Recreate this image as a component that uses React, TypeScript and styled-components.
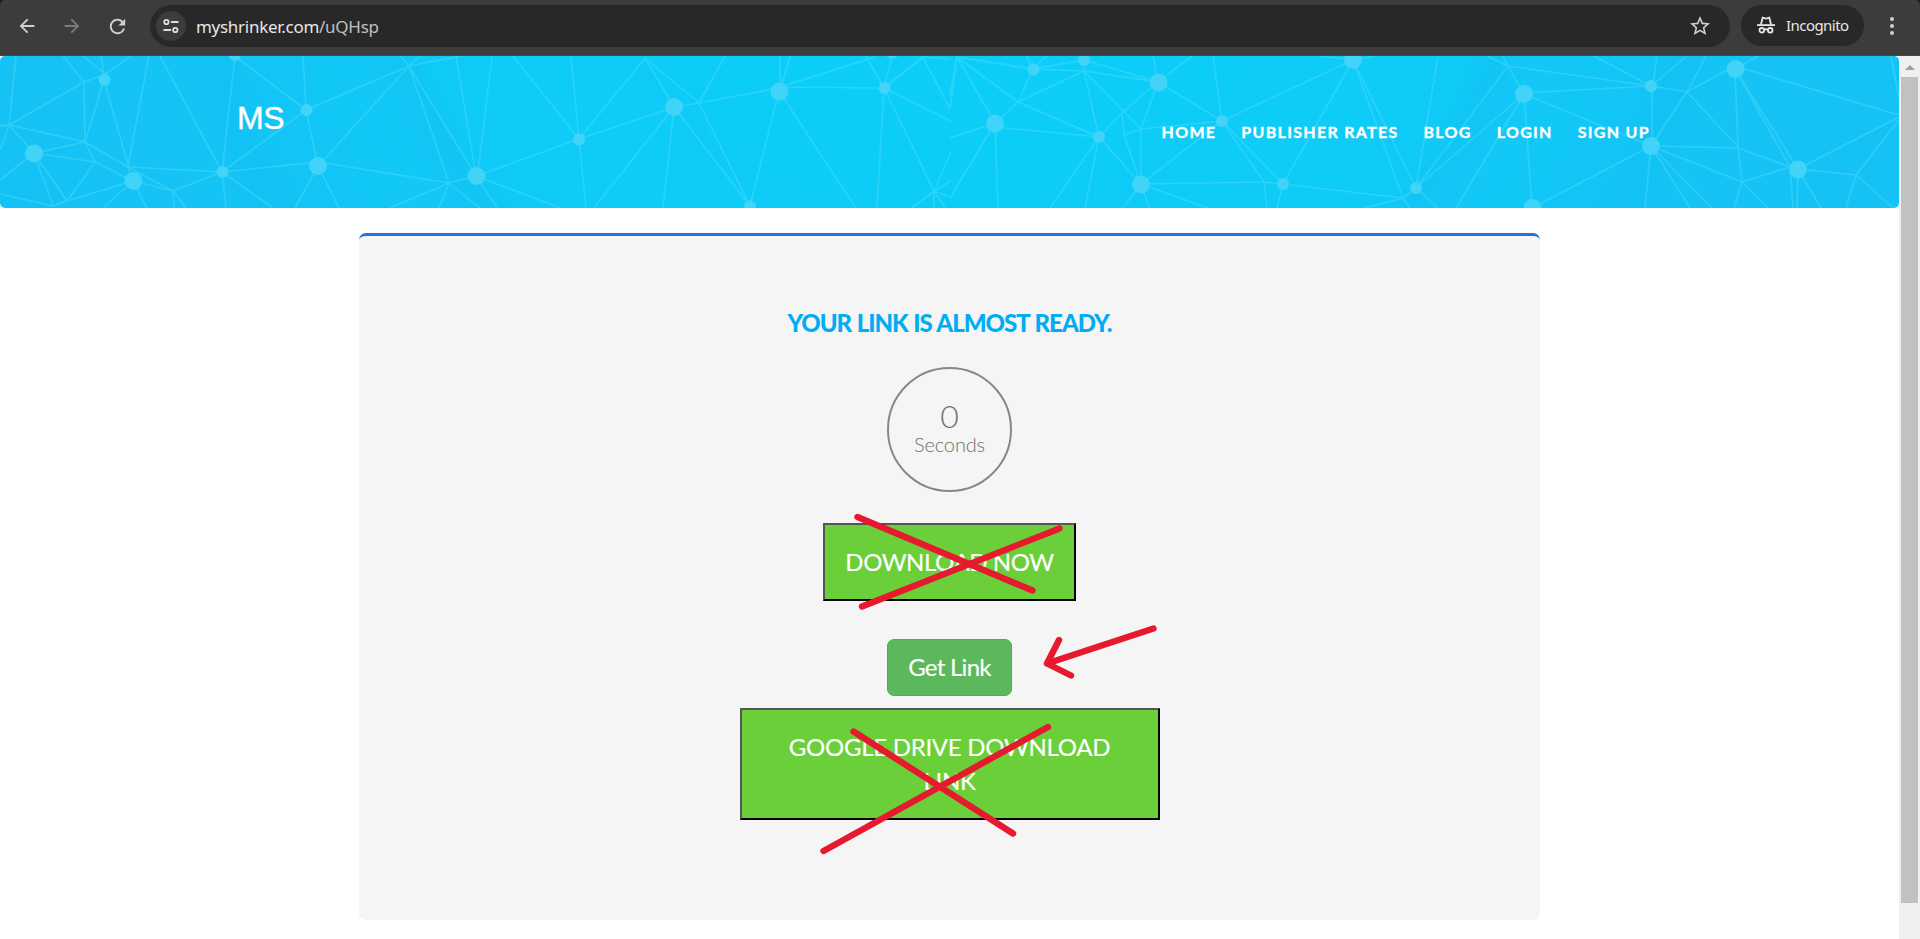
import React from "react";
import styled, { createGlobalStyle } from "styled-components";
import { MdArrowBack, MdArrowForward, MdRefresh, MdStarBorder } from "react-icons/md";

const GlobalStyle = createGlobalStyle`
  *, *::before, *::after { box-sizing: border-box; }
  html, body { margin: 0; padding: 0; overflow: hidden; background: #fff; }
`;

const Window = styled.div`
  display: flex;
  flex-direction: column;
  width: 100%;
  height: 939px;
  overflow: hidden;
  font-family: Lato, "Liberation Sans", sans-serif;
`;

/* Browser toolbar */
const Toolbar = styled.div`
  display: flex;
  align-items: flex-start;
  height: 56px;
  flex: none;
  padding: 5px 16px 0 15px;
  background: #3c3c3c;
  border-bottom: 1px solid #464646;
  border-radius: 5px 5px 0 0;
  box-shadow: 0 -8px 0 8px #1c1c1c;
  font-family: "Open Sans", "Noto Sans", sans-serif;
`;

const ToolButton = styled.button<{ $dim?: boolean; $gap: number }>`
  display: grid;
  place-items: center;
  width: 24px;
  height: 42px;
  margin: 0 ${(p) => p.$gap}px 0 0;
  padding: 0;
  border: 0;
  background: none;
  color: ${(p) => (p.$dim ? "#7c7c7c" : "#d0d0d0")};
`;

const AddressBar = styled.div`
  display: flex;
  align-items: center;
  flex: 1;
  height: 42px;
  padding: 0 18px 0 6px;
  border-radius: 21px;
  background: #282828;
`;

const SiteInfo = styled.span`
  display: grid;
  place-items: center;
  width: 30px;
  height: 30px;
  margin-right: 10px;
  border-radius: 50%;
  background: #3c3c3c;
`;

const Address = styled.span`
  flex: 1;
  padding-top: 1px;
  color: #e6e6e6;
  font-family: "Noto Sans", "Open Sans", sans-serif;
  font-size: 17px;
  line-height: 24px;
  letter-spacing: -0.28px;
`;

const AddressPath = styled.span`
  color: #c0c0c0;
`;

const StarSlot = styled.span`
  display: flex;
  color: #d0d0d0;
`;

const IncognitoPill = styled.div`
  display: flex;
  align-items: center;
  gap: 11px;
  width: 123px;
  height: 41px;
  margin-left: 11px;
  padding: 0 0 1px 16px;
  border-radius: 21px;
  background: #282828;
  color: #e6e6e6;
  font-family: "Noto Sans", "Open Sans", sans-serif;
  font-size: 15px;
  letter-spacing: -0.55px;
`;

const MenuDots = styled.div`
  display: flex;
  flex-direction: column;
  align-items: center;
  justify-content: center;
  gap: 3px;
  width: 8px;
  height: 42px;
  margin: 0 8px 0 24px;
`;

const Dot = styled.i`
  width: 4px;
  height: 4px;
  border-radius: 50%;
  background: #d0d0d0;
`;

/* Viewport with page and scrollbar */
const Viewport = styled.div`
  display: flex;
  flex: 1;
  min-height: 0;
`;

const Page = styled.div`
  position: relative;
  flex: 1;
  min-width: 0;
  overflow: hidden;
  background: #fff;
`;

const Scrollbar = styled.div`
  display: flex;
  flex-direction: column;
  align-items: center;
  width: 21px;
  padding-top: 9px;
  background: #f0f0f0;
`;

const ScrollUp = styled.i`
  width: 0;
  height: 0;
  border: 5px solid transparent;
  border-top-width: 0;
  border-bottom-color: #a0a0a0;
`;

const ScrollThumb = styled.div`
  width: 17px;
  height: 826px;
  margin: 7px 0 0 0;
  background: #c1c1c1;
`;

const Header = styled.header`
  position: relative;
  display: flex;
  justify-content: space-between;
  height: 152px;
  padding: 0 249px 0 237px;
  border-radius: 5px;
  overflow: hidden;
  color: #fff;
`;

const HeaderArt = styled.svg`
  position: absolute;
  inset: 0;
`;

const Brand = styled.div`
  position: relative;
  margin-top: 44px;
  font-family: "Liberation Sans", Arial, sans-serif;
  font-size: 32px;
  line-height: 37px;
  letter-spacing: -0.5px;
  -webkit-text-stroke: 0.4px #fff;
`;

const Nav = styled.nav`
  position: relative;
  display: flex;
  gap: 25px;
  height: 24px;
  margin-top: 64px;
`;

const NavItem = styled.a`
  color: #fff;
  font-size: 16px;
  font-weight: 700;
  line-height: 24px;
  letter-spacing: 1.3px;
  -webkit-text-stroke: 0.3px #fff;
`;

const Card = styled.main`
  display: flex;
  flex-direction: column;
  align-items: center;
  width: 1181px;
  height: 687px;
  margin: 25px 0 0 359px;
  padding-top: 70px;
  border-top: 3px solid #1f74de;
  border-radius: 7px;
  background: #f5f5f5;
`;

const Heading = styled.h1`
  margin: 0;
  color: #00adf2;
  font-size: 24px;
  font-weight: 900;
  line-height: 34px;
  letter-spacing: -1px;
  word-spacing: 0.8px;
  white-space: nowrap;
`;

const Countdown = styled.div`
  display: flex;
  flex-direction: column;
  align-items: center;
  width: 125px;
  height: 125px;
  margin-top: 27px;
  padding-top: 31px;
  border: 2px solid #888;
  border-radius: 50%;
  color: #707070;
  font-weight: 300;
`;

const CountValue = styled.span`
  font-size: 32px;
  line-height: 32px;
`;

const CountUnit = styled.span`
  font-size: 20px;
  line-height: 24px;
  letter-spacing: -0.15px;
`;

const BannerButton = styled.button<{ $width: number; $height: number; $top: number; $pad: number; $tracking: number }>`
  width: ${(p) => p.$width}px;
  height: ${(p) => p.$height}px;
  margin-top: ${(p) => p.$top}px;
  padding: 0 ${(p) => p.$pad}px;
  border: 2px solid;
  border-color: #555 #000 #000 #555;
  background: #6bcf3a;
  color: #fff;
  font-family: inherit;
  font-size: 24px;
  line-height: 34px;
  letter-spacing: ${(p) => p.$tracking}px;
  -webkit-text-stroke: 0.15px #fff;
`;

const GetLink = styled.button`
  width: 125px;
  height: 57px;
  margin-top: 38px;
  padding: 0 0 2px;
  border: 1px solid #4cae4c;
  border-radius: 7px;
  background: #5cb85c;
  color: #fff;
  font-family: inherit;
  font-size: 24px;
  letter-spacing: -0.72px;
  -webkit-text-stroke: 0.15px #fff;
`;

const Markup = styled.svg`
  position: absolute;
  left: 800px;
  top: 440px;
  pointer-events: none;
`;

type Edge = [number, number, number, number];
type Knot = [number, number, number];

const edges: Edge[] = [
  [16,56,9,125],[9,125,84,82],[84,82,104,75],[63,56,84,82],[84,82,85,142],[85,142,104,80],[104,80,129,168],
  [83,56,106,75],[101,56,104,75],[131,56,104,75],[149,56,128,166],[9,125,0,126],[9,125,0,150],[9,125,85,142],
  [9,125,34,153],[34,153,85,142],[85,142,95,162],[85,142,128,167],[34,153,95,162],[95,162,133,181],[95,162,67,201],
  [34,153,0,180],[34,153,53,206],[34,153,67,201],[67,201,133,181],[0,194,53,206],[53,206,67,201],[128,167,133,181],
  [128,167,222,172],[128,167,173,191],[133,181,173,191],[133,181,147,208],[133,181,103,208],[173,191,222,172],
  [173,191,174,208],[173,191,186,208],[160,56,222,172],[235,56,222,172],[235,56,306,110],[306,110,222,172],
  [306,110,303,56],[306,110,409,66],[306,110,318,166],[222,172,318,162],[318,166,409,66],[318,166,295,208],
  [318,166,339,208],[222,172,226,208],[222,172,273,208],[318,162,449,183],[409,66,449,183],[409,66,476,176],
  [409,66,400,56],[409,66,420,56],[409,66,461,56],[456,56,476,176],[449,183,476,176],[449,183,390,208],
  [449,183,439,208],[449,183,480,208],
  [492,56,478,172],[513,56,579,139],[571,56,579,139],[645,58,579,139],[645,58,674,107],[645,58,699,103],
  [699,103,725,56],[674,107,699,103],[699,103,779,88],[699,103,750,206],[674,107,750,206],[674,107,579,139],
  [579,139,476,176],[579,139,586,208],[476,176,560,208],[476,176,497,208],[674,107,594,208],[674,107,663,208],
  [779,91,750,206],[780,56,780,91],[790,56,780,91],[780,87,875,57],[780,87,884,88],[779,91,856,208],
  [866,56,884,88],[892,56,884,88],[884,88,923,57],[923,57,950,59],[923,57,950,109],[950,109,957,56],
  [884,88,951,121],[884,88,877,208],[884,88,934,191],[934,191,951,152],[934,191,951,181],[934,191,948,196],
  [934,191,912,208],[934,191,934,208],[934,191,945,208],
  [957,57,1033,69],[957,57,995,123],[957,57,1018,102],[957,57,950,95],[1027,56,1033,69],[1047,56,1033,69],
  [1033,69,1084,60],[1033,69,1084,71],[1033,69,1018,102],[1018,102,995,123],[1018,102,1084,71],[1018,102,1099,137],
  [1084,71,1099,137],[1084,60,1158,82],[1084,71,1158,82],[1084,60,1084,71],[1084,71,1141,129],[1153,56,1158,82],
  [1192,56,1158,82],[1158,82,1122,113],[1122,113,1099,137],[1158,82,1141,129],[1158,82,1222,121],[1122,113,1124,135],
  [1124,135,1141,129],[1124,135,1141,184],[1141,129,1222,121],[1141,129,1141,184],[1099,137,1141,184],
  [995,127,1099,137],[995,123,950,138],[995,123,950,198],[995,123,998,208],[1099,137,1050,208],[1099,137,1085,208],
  [1141,184,1222,121],[1141,184,1264,182],[1264,182,1283,184],[1222,121,1264,182],[1222,121,1283,184],
  [1264,182,1267,208],[1141,184,1123,208],[1141,184,1149,208],[1141,184,1208,208],[1213,56,1222,121],
  [1222,121,1353,60],[1353,60,1283,184],[1353,60,1403,198],[1353,60,1416,188],[1283,184,1277,208],
  [1283,184,1403,198],[1403,198,1416,188],[1403,198,1365,208],[1403,198,1410,208],[1416,188,1438,56],
  [1416,188,1508,66],[1416,188,1524,94],[1416,188,1438,208],[1353,60,1320,56],[1353,60,1375,56],
  [1503,56,1508,66],[1487,56,1508,66],[1508,66,1524,94],[1508,66,1651,86],[1524,93,1651,86],[1524,94,1651,146],
  [1524,94,1532,208],[1524,94,1456,208],[1594,56,1651,86],[1657,56,1653,86],[1687,56,1651,86],[1651,86,1687,92],
  [1687,92,1706,56],[1687,92,1735,66],[1687,92,1739,148],[1687,92,1651,146],[1652,86,1652,146],[1735,69,1738,148],
  [1735,69,1790,167],[1735,69,1798,169],[1735,66,1899,115],[1735,69,1758,56],[1891,56,1899,98],[1651,146,1738,148],
  [1738,148,1742,182],[1738,148,1790,167],[1790,167,1742,182],[1651,146,1742,182],[1742,182,1734,208],
  [1742,182,1768,208],[1651,146,1532,208],[1651,146,1645,208],[1651,146,1690,208],[1651,146,1712,208],
  [1790,167,1793,208],[1798,169,1797,208],[1798,169,1821,208],[1798,169,1899,117],[1798,169,1856,175],
  [1856,175,1899,120],[1856,175,1846,208],[1856,175,1893,208],
];

const knots: Knot[] = [
  [104.5,80,6],[34,153.5,9],[133.5,181,9],[222.5,172,6],[318,166,9],[235,55,6],[306.5,110,6],[476.5,176,9],
  [579,139.5,6],[674,107,9],[779.5,91.5,9],[884.5,88,6],[750,206.5,6],[892,49.5,9],
  [1033.5,69.5,6],[1084,60,6],[1158.5,82.5,9],[995,123.5,9],[1099,137,6],[1141,184.5,9],[1222,121,6],
  [1353,60,9],[1283,184,6],[1416,188,6],
  [1524,94,9],[1651,86,6],[1735.5,69,9],[1651,146,9],[1798,169.5,9],[1532.5,208,9],
];

const Network = () => (
  <HeaderArt width="1899" height="152" viewBox="0 56 1899 152">
    <defs>
      <radialGradient id="glow" gradientUnits="userSpaceOnUse" cx="950" cy="-150" r="960">
        <stop offset="0" stopColor="#0dcff9" />
        <stop offset="0.365" stopColor="#0dcef8" />
        <stop offset="0.39" stopColor="#0fcaf7" />
        <stop offset="0.43" stopColor="#0fccf8" />
        <stop offset="0.58" stopColor="#10caf7" />
        <stop offset="0.61" stopColor="#12c5f5" />
        <stop offset="0.65" stopColor="#12c8f7" />
        <stop offset="0.76" stopColor="#13c6f6" />
        <stop offset="0.79" stopColor="#14c2f4" />
        <stop offset="0.83" stopColor="#15c4f5" />
        <stop offset="1" stopColor="#16c3f5" />
      </radialGradient>
    </defs>
    <rect y="56" width="1899" height="152" fill="url(#glow)" />
    <g stroke="#5fe0fb" strokeWidth="1.6" opacity="0.36">
      {edges.map(([x1, y1, x2, y2], i) => (
        <line key={i} x1={x1} y1={y1} x2={x2} y2={y2} />
      ))}
    </g>
    <g fill="#42d3f8">
      {knots.map(([cx, cy, r], i) => (
        <circle key={i} cx={cx} cy={cy} r={r} />
      ))}
    </g>
  </HeaderArt>
);

const TuneIcon = () => (
  <svg width="16" height="16" viewBox="0 0 16 16" fill="none" stroke="#dedede" strokeWidth="1.8">
    <circle cx="3.4" cy="4" r="2.2" />
    <path d="M8 4h7.5M0.5 12H8" />
    <circle cx="12.3" cy="12" r="2.2" />
  </svg>
);

const IncognitoIcon = () => (
  <svg width="18" height="18" viewBox="0 0 18 18" fill="none" stroke="#e6e6e6" strokeWidth="1.8">
    <path d="M0 9.1h18" />
    <path d="M3.9 8.8 5.7 1.6l3.3.9 3.3-.9 1.8 7.2" />
    <circle cx="4.8" cy="14.3" r="2.3" />
    <circle cx="13.2" cy="14.3" r="2.3" />
    <path d="M7 13.8q2-1.1 4 0" />
  </svg>
);

const navLabels = ["HOME", "PUBLISHER RATES", "BLOG", "LOGIN", "SIGN UP"];

export default function App() {
  return (
    <Window>
      <GlobalStyle />
      <Toolbar>
        <ToolButton $gap={21}><MdArrowBack size={22} /></ToolButton>
        <ToolButton $gap={21} $dim><MdArrowForward size={22} /></ToolButton>
        <ToolButton $gap={21}><MdRefresh size={23} /></ToolButton>
        <AddressBar>
          <SiteInfo><TuneIcon /></SiteInfo>
          <Address>myshrinker.com<AddressPath>/uQHsp</AddressPath></Address>
          <StarSlot><MdStarBorder size={24} /></StarSlot>
        </AddressBar>
        <IncognitoPill><IncognitoIcon />Incognito</IncognitoPill>
        <MenuDots><Dot /><Dot /><Dot /></MenuDots>
      </Toolbar>
      <Viewport>
        <Page>
          <Header>
            <Network />
            <Brand>MS</Brand>
            <Nav>
              {navLabels.map((label) => <NavItem key={label}>{label}</NavItem>)}
            </Nav>
          </Header>
          <Card>
            <Heading>YOUR LINK IS ALMOST READY.</Heading>
            <Countdown>
              <CountValue>0</CountValue>
              <CountUnit>Seconds</CountUnit>
            </Countdown>
            <BannerButton $width={253} $height={78} $top={31} $pad={0} $tracking={-0.42}>DOWNLOAD NOW</BannerButton>
            <GetLink>Get Link</GetLink>
            <BannerButton $width={420} $height={112} $top={12} $pad={40} $tracking={-0.28}>GOOGLE DRIVE DOWNLOAD LINK</BannerButton>
          </Card>
          <Markup width="380" height="380" viewBox="800 496 380 380" fill="none" stroke="#e6192e" strokeWidth="6.4" strokeLinecap="round" strokeLinejoin="round">
            <path d="M857.5 517 1032.500 590.500M862 606.500 1059.500 528.500" />
            <path d="M1153.500 628.500 1047 663.500M1059 640 1047 663.500 1071 675.500" />
            <path d="M853.500 731.500 1013 833.500M823.500 851 1048 727" />
          </Markup>
        </Page>
        <Scrollbar>
          <ScrollUp />
          <ScrollThumb />
        </Scrollbar>
      </Viewport>
    </Window>
  );
}
